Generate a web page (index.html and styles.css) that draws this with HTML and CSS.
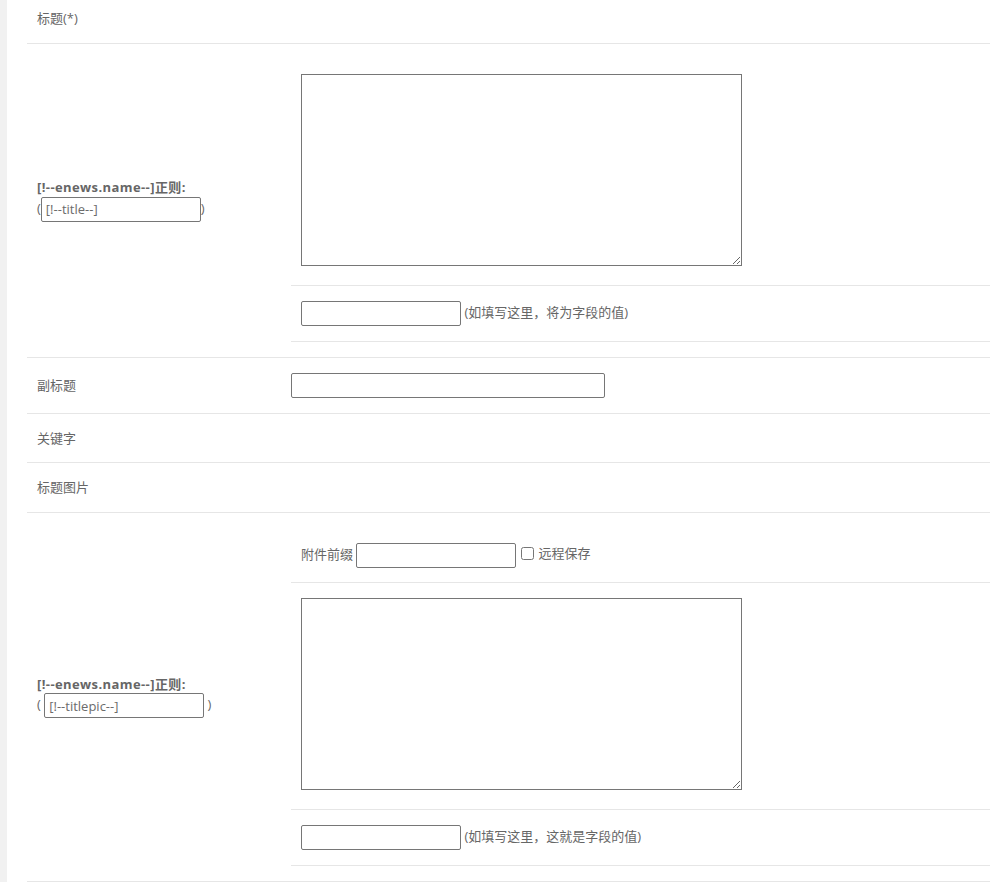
FILE: index.html
```html
<!DOCTYPE html>
<html lang="zh-CN">
<head>
  <meta charset="UTF-8">
  <title>增加信息</title>
  <link rel="stylesheet" href="styles.css">
</head>
<body>
  <div class="page">
    <table class="form">
      <tr>
        <td class="label">标题(*)</td>
        <td class="field"></td>
      </tr>
      <tr>
        <td class="label">
          <b>[!--enews.name--]正则:</b><br>(<input type="text" class="rule" value="[!--title--]">)
        </td>
        <td class="field">
          <table class="sub">
            <tr><td><textarea></textarea></td></tr>
            <tr><td><input type="text" class="short"> <span class="tip">(如填写这里，将为字段的值)</span></td></tr>
          </table>
        </td>
      </tr>
      <tr>
        <td class="label">副标题</td>
        <td class="field plain"><input type="text" class="wide"></td>
      </tr>
      <tr>
        <td class="label">关键字</td>
        <td class="field"></td>
      </tr>
      <tr>
        <td class="label">标题图片</td>
        <td class="field"></td>
      </tr>
      <tr>
        <td class="label">
          <b>[!--enews.name--]正则:</b><br>( <input type="text" class="rule" value="[!--titlepic--]"> )
        </td>
        <td class="field">
          <table class="sub">
            <tr><td class="prefix">附件前缀 <input type="text" class="short"><label class="check"><input type="checkbox">远程保存</label></td></tr>
            <tr><td><textarea></textarea></td></tr>
            <tr><td><input type="text" class="short"> <span class="tip">(如填写这里，这就是字段的值)</span></td></tr>
          </table>
        </td>
      </tr>
    </table>
  </div>
</body>
</html>
```

FILE: styles.css
```css
body {
  margin: 0;
  background-color: #f1f1f1;
  font-family: "Open Sans", "Noto Sans CJK SC", sans-serif;
  font-size: 13px;
  color: #666;
}
.page {
  margin-left: 7px;
  margin-top: -6px;
  padding-left: 20px;
  background: #fff;
  min-height: 900px;
  overflow: hidden;
}
table {
  border-collapse: collapse;
}
.form {
  width: 100%;
}
.form td {
  border-bottom: 1px solid #e6e6e6;
  padding: 15px 10px;
  line-height: 18.5px;
  vertical-align: middle;
}
.form td.label {
  width: 234px;
}
.form td.field {
  padding: 15px 0 15px 10px;
}
.form b {
  font-weight: bold;
  letter-spacing: 0.4px;
}
.sub {
  width: 100%;
}
.sub td {
  padding: 15px 10px;
}
.sub td.prefix {
  padding-bottom: 14px;
}
input[type='text'] {
  box-sizing: border-box;
  height: 25px;
  border: 1px solid #767676;
  border-radius: 2px;
  padding: 1px 4px;
  font-family: "Open Sans", "Noto Sans CJK SC", sans-serif;
  font-size: 13px;
  color: #6b6b6b;
  vertical-align: middle;
  margin: 0;
}
.rule {
  width: 160px;
}
.short {
  width: 160px;
}
.wide {
  width: 314px;
}
textarea {
  box-sizing: border-box;
  width: 441px;
  height: 192px;
  border: 1px solid #767676;
  margin: 0 0 4px;
  vertical-align: top;
}
.check input {
  margin: 0 4px 0 5px;
  width: 13px;
  height: 13px;
  vertical-align: -2px;
}
.tip {
  color: #666;
}
```
